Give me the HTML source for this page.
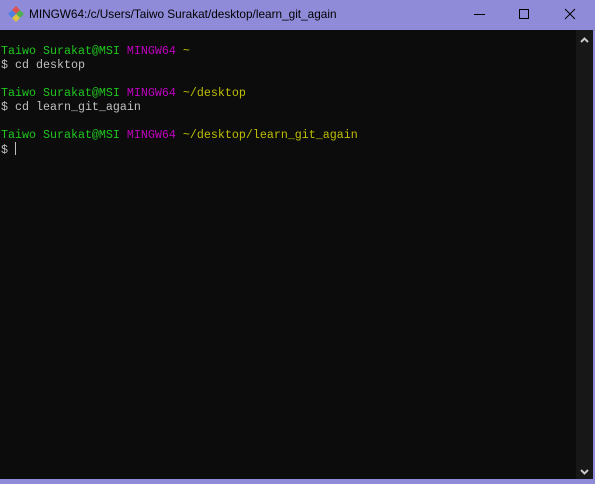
<!DOCTYPE html>
<html><head><style>
body{margin:0;width:595px;height:481px;overflow:hidden;background:#8f8bd8;position:relative;font-family:"Liberation Sans",sans-serif}
.title{position:absolute;left:0;top:0;width:595px;height:30px;background:#8f8bd8}
.title span{position:absolute;left:29px;top:7px;font-size:11.8px;color:#000}
.term{position:absolute;left:0;top:30px;width:576px;height:449px;background:#0c0c0c}
.sb{position:absolute;left:576px;top:30px;width:17px;height:449px;background:#171717}
pre{margin:0;position:absolute;left:1px;top:14px;font-family:"Liberation Mono",monospace;font-size:11.67px;line-height:14px;color:#c0c0c0}
.g{color:#1fc71f}.m{color:#bf00bf}.y{color:#bfbf00}
</style></head><body>
<div class="title">
<svg style="position:absolute;left:7px;top:5px" width="18" height="18" viewBox="0 0 18 18">
<path d="M9 1 L13 5 L9 9 L5 5Z" fill="#e05050"/><path d="M13 5 L17 9 L13 13 L9 9Z" fill="#50b050"/>
<path d="M9 9 L13 13 L9 17 L5 13Z" fill="#e0c040"/><path d="M5 5 L9 9 L5 13 L1 9Z" fill="#5080e0"/></svg>
<span>MINGW64:/c/Users/Taiwo Surakat/desktop/learn_git_again</span>
<svg style="position:absolute;left:440px;top:0" width="155" height="30">
<line x1="34" y1="14.5" x2="45" y2="14.5" stroke="#000"/>
<rect x="79.5" y="9.5" width="9" height="9" fill="none" stroke="#000"/>
<path d="M125 9 L135 19 M135 9 L125 19" stroke="#000"/></svg>
</div>
<div class="term">
<pre><span class="g">Taiwo Surakat@MSI</span> <span class="m">MINGW64</span> <span class="y">~</span>
$ cd desktop

<span class="g">Taiwo Surakat@MSI</span> <span class="m">MINGW64</span> <span class="y">~/desktop</span>
$ cd learn_git_again

<span class="g">Taiwo Surakat@MSI</span> <span class="m">MINGW64</span> <span class="y">~/desktop/learn_git_again</span>
$ <span style="display:inline-block;width:1px;height:13px;background:#c0c0c0;vertical-align:-2px"></span></pre>
</div>
<div class="sb">
<svg width="17" height="449"><path d="M5 12 L8.5 8.5 L12 12" stroke="#c8c8c8" stroke-width="2" fill="none"/>
<path d="M5 440 L8.5 443.5 L12 440" stroke="#c8c8c8" stroke-width="2" fill="none"/></svg>
</div>
</body></html>
